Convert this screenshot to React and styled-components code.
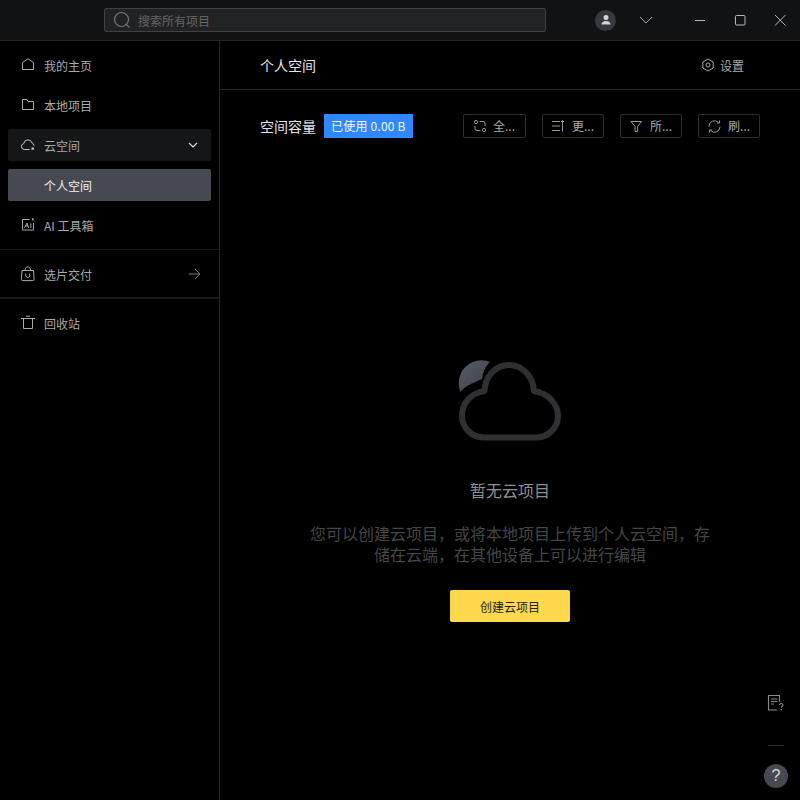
import React from 'react';
import styled, { createGlobalStyle } from 'styled-components';

const GlobalStyle = createGlobalStyle`
  html, body {
    margin: 0;
    padding: 0;
    background: #000;
    font-family: "Noto Sans CJK SC", "Liberation Sans", sans-serif;
  }
  * { box-sizing: border-box; }
`;

const Icon = ({ size = 16, sw = 1, children, ...rest }) => (
  <svg width={size} height={size} viewBox={`0 0 ${size} ${size}`} fill="none" stroke="currentColor" strokeWidth={sw} {...rest}>
    {children}
  </svg>
);

const navItems = [
  { label: '我的主页', icon: <path d="M2.5 5.500 8 1.800l5.500 3.700v7h-11z" strokeLinejoin="round" /> },
  { label: '本地项目', icon: <path d="M2.500 2.500H7l1 2h5.500v8h-11z" strokeLinejoin="round" /> },
];

const App = () => (
  <Page>
    <GlobalStyle />
    <TitleBar>
      <SearchBox>
        <svg width="20" height="20" viewBox="0 0 20 20" fill="none" stroke="#77797d" strokeWidth="1.2">
          <circle cx="9.500" cy="9.500" r="7" />
          <path d="m14.600 14.600 3 3" />
        </svg>
        <span>搜索所有项目</span>
      </SearchBox>
      <Avatar>
        <svg width="12" height="12" viewBox="0 0 12 12" fill="#d4d5d8">
          <circle cx="6" cy="3.600" r="2.500" />
          <path d="M1.500 10.600c0-2.400 1.800-3.600 4.500-3.600s4.500 1.200 4.500 3.600z" />
        </svg>
      </Avatar>
      <AccountArrow>
        <svg width="14" height="8" viewBox="0 0 14 8" fill="none" stroke="#a8a9ac" strokeWidth="1">
          <path d="m1 1 6 6 6-6" />
        </svg>
      </AccountArrow>
      <WindowButtons>
        <Icon size={14}><path d="M2 7.500h10" /></Icon>
        <Icon size={14}><rect x="2.500" y="2.500" width="9.500" height="9.500" rx="1" /></Icon>
        <Icon size={14}><path d="m2 2 10.500 10.500M12.500 2 2 12.500" /></Icon>
      </WindowButtons>
    </TitleBar>
    <Body>
      <Sidebar>
        <NavGroup>
          {navItems.map((item) => (
            <NavItem key={item.label}>
              <Icon>{item.icon}</Icon>
              <span>{item.label}</span>
            </NavItem>
          ))}
          <NavItem $open>
            <Icon>
              <path d="M9.500 12.500H4.200a3 3 0 0 1-.5-5.900 4.300 4.300 0 0 1 8.400-.6 3.300 3.300 0 0 1 2 2.800" />
              <rect x="11.500" y="10.500" width="2.400" height="2.200" fill="currentColor" stroke="none" />
            </Icon>
            <span>云空间</span>
            <Trailing $bright>
              <Icon size={12} sw={1.2}><path d="m2 4 4 4 4-4" /></Icon>
            </Trailing>
          </NavItem>
          <NavItem $active>
            <Spacer />
            <span>个人空间</span>
          </NavItem>
          <NavItem>
            <Icon>
              <path d="M9.500 2.500h-7V13h11V6" />
              <path d="M4.500 11 7 6l1.700 5M5.500 9h2.500M10.800 6.500V11" />
              <path d="M12.800 1.200v2.200" strokeWidth="1.400" />
            </Icon>
            <span>AI 工具箱</span>
          </NavItem>
        </NavGroup>
        <SidebarSection>
          <NavItem>
            <Icon>
              <path d="M2 4.500h11.500l.6 8.700a1.300 1.300 0 0 1-1.300 1.400H2.700a1.300 1.300 0 0 1-1.300-1.400z" strokeLinejoin="round" />
              <path d="M5 4.500C5 2 6.300.8 7.700.8s2.800 1.200 2.800 3.700" />
              <path d="M5.700 7.500v2a2 2 0 0 0 4 0v-2" />
            </Icon>
            <span>选片交付</span>
            <Trailing $nudge>
              <Icon size={14}><path d="M1.500 7h11M8 2l5 5-5 5" /></Icon>
            </Trailing>
          </NavItem>
        </SidebarSection>
        <TrashSection>
          <NavItem>
            <Icon>
              <path d="M1 3.500h14M6 1.200h4M3.500 3.500v10h9v-10" />
            </Icon>
            <span>回收站</span>
          </NavItem>
        </TrashSection>
      </Sidebar>
      <Main>
        <Header>
          <h1>个人空间</h1>
          <SettingsLink>
            <Icon size={14}>
              <path d="M7 1 12.200 4v6L7 13l-5.200-3V4z" strokeLinejoin="round" />
              <circle cx="7" cy="7" r="2" />
            </Icon>
            <span>设置</span>
          </SettingsLink>
        </Header>
        <Toolbar>
          <CapacityLabel>空间容量</CapacityLabel>
          <CapacityBadge>已使用 0.00 B</CapacityBadge>
          <ToolButtons>
            <ToolButton $wide>
              <Icon size={14}>
                <circle cx="3" cy="3" r="1.600" />
                <circle cx="11" cy="11" r="1.600" />
                <path d="M6.500 2.500H10a2 2 0 0 1 2 2V7M2 7v2.500a2 2 0 0 0 2 2h3.500" />
              </Icon>
              <span>全...</span>
            </ToolButton>
            <ToolButton>
              <Icon size={14}>
                <path d="M0 2.500h8M0 7h8M0 11.500h8M10.500 12.500V1.500M9 3l1.500-1.500L12 3" />
              </Icon>
              <span>更...</span>
            </ToolButton>
            <ToolButton>
              <Icon size={14}>
                <path d="M1 2.500h10.500L7.600 7.500v5H5v-5z" strokeLinejoin="round" />
              </Icon>
              <span>所...</span>
            </ToolButton>
            <ToolButton>
              <Icon size={14}>
                <path d="M1 7.500A5.500 5.500 0 0 1 10.500 3.500M12 7.500A5.500 5.500 0 0 1 2.500 11.500" />
                <path d="M11.500 1.500V4H9M1.500 13.500V11H4" />
              </Icon>
              <span>刷...</span>
            </ToolButton>
          </ToolButtons>
        </Toolbar>
        <EmptyState>
          <svg width="106" height="86" viewBox="0 0 106 86" fill="none">
            <defs>
              <linearGradient id="moon" x1="0" y1="0" x2="1" y2="1">
                <stop offset="0" stopColor="#565b64" />
                <stop offset="1" stopColor="#3e434b" />
              </linearGradient>
            </defs>
            <path d="M33 3.700A23 23 0 0 0 3.500 34C8 28 16 25 25 21 26 14 28 9 33 3.700z" fill="url(#moon)" />
            <path
              d="M27.500 33C28 18 39 7 52 7s24 11 25 26c13 2 24 12 24 25 0 12-10 21.500-22 21.500H27C15 79.500 5 70 5 58c0-13 9-23 22.500-25z"
              stroke="#2e3033"
              strokeWidth="6"
              strokeLinejoin="round"
            />
          </svg>
          <EmptyTitle>暂无云项目</EmptyTitle>
          <EmptyText>您可以创建云项目，或将本地项目上传到个人云空间，存储在云端，在其他设备上可以进行编辑</EmptyText>
          <CreateButton>创建云项目</CreateButton>
        </EmptyState>
        <SideTools>
          <svg width="18" height="18" viewBox="0 0 18 18" fill="none" stroke="#8b8c8f" strokeWidth="1.100">
            <path d="M10 16H1.500V1.500h11V8M4 5h6.500M4 7.500h6.500M4 10h3" />
            <path d="M12.500 11c0-2 3.500-2 3.500 0 0 1.300-1.700 1.300-1.700 2.700M14.300 15v1.200" />
          </svg>
          <ToolDivider />
          <HelpButton>?</HelpButton>
        </SideTools>
      </Main>
    </Body>
  </Page>
);

export default App;

const Page = styled.div`
  width: 800px;
  height: 800px;
  display: flex;
  flex-direction: column;
  overflow: hidden;
  background: #000;
`;

const TitleBar = styled.div`
  height: 41px;
  flex: none;
  display: flex;
  align-items: center;
  padding-left: 104px;
  background: #111214;
  border-bottom: 1px solid #242527;
`;

const SearchBox = styled.div`
  width: 442px;
  height: 24px;
  display: flex;
  align-items: center;
  gap: 6px;
  padding-left: 7px;
  background: #212224;
  border: 1px solid #404144;
  border-radius: 2px;
  color: #636467;
  font-size: 12px;
`;

const Avatar = styled.div`
  width: 21px;
  height: 21px;
  margin-left: 49px;
  display: flex;
  align-items: center;
  justify-content: center;
  border-radius: 50%;
  background: #37383d;
`;

const AccountArrow = styled.div`
  display: flex;
  margin-left: 23px;
`;

const WindowButtons = styled.div`
  display: flex;
  gap: 26px;
  margin-left: 40px;
  color: #b5b6b8;
`;

const Body = styled.div`
  flex: 1;
  display: flex;
  min-height: 0;
`;

const Sidebar = styled.nav`
  width: 220px;
  flex: none;
  border-right: 1px solid #252628;
  padding-top: 8px;
`;

const NavGroup = styled.div`
  display: flex;
  flex-direction: column;
  gap: 8px;
  padding: 0 8px 8px;
`;

const SidebarSection = styled.div`
  padding: 8px 8px 7px;
  border-top: 1px solid #1a1b1c;
`;

const TrashSection = styled.div`
  padding: 8px 8px;
  border-top: 2px solid #1a1b1c;
`;

const NavItem = styled.div`
  height: 32px;
  display: flex;
  align-items: center;
  gap: 8px;
  padding: 0 12px;
  border-radius: 2px;
  font-size: 12px;
  color: ${(props) => (props.$active ? '#f0f0f2' : '#a9aaac')};
  background: ${(props) => (props.$active ? '#474950' : props.$open ? '#151618' : 'transparent')};
  svg { color: ${(props) => (props.$open ? '#c6c7c9' : '#a9aaac')}; flex: none; }
`;

const Spacer = styled.div`
  width: 16px;
`;

const Trailing = styled.div`
  margin-left: auto;
  margin-right: ${(props) => (props.$nudge ? '-2px' : '0')};
  display: flex;
  align-items: center;
  svg { color: ${(props) => (props.$bright ? '#d8d9db' : '#77787b')}; }
`;

const Main = styled.main`
  flex: 1;
  position: relative;
  display: flex;
  flex-direction: column;
  min-width: 0;
`;

const Header = styled.header`
  height: 49px;
  flex: none;
  display: flex;
  align-items: center;
  justify-content: space-between;
  padding: 0 56px 0 40px;
  border-bottom: 1px solid #252628;

  h1 {
    margin: 0;
    font-size: 14px;
    font-weight: 400;
    color: #e4e4e6;
  }
`;

const SettingsLink = styled.div`
  display: flex;
  align-items: center;
  gap: 5px;
  font-size: 12px;
  color: #a9aaac;
`;

const Toolbar = styled.div`
  display: flex;
  align-items: center;
  margin-top: 24px;
  padding: 0 40px;
`;

const CapacityLabel = styled.div`
  font-size: 14px;
  color: #e4e4e6;
`;

const CapacityBadge = styled.div`
  height: 24px;
  margin-left: 8px;
  padding: 0 7px 1px;
  display: flex;
  align-items: center;
  background: #2f88ff;
  color: #f4f8ff;
  font-size: 12px;
  letter-spacing: 0.2px;
`;

const ToolButtons = styled.div`
  margin-left: auto;
  display: flex;
  gap: 16px;
`;

const ToolButton = styled.div`
  width: ${(props) => (props.$wide ? '63px' : '62px')};
  height: 24px;
  display: flex;
  align-items: center;
  gap: 6px;
  padding: 0 0 1px 9px;
  border: 1px solid #2c2d2f;
  border-radius: 2px;
  font-size: 12px;
  color: #a9aaac;
  svg { color: #98999c; flex: none; }
`;

const EmptyState = styled.div`
  display: flex;
  flex-direction: column;
  align-items: center;
  margin-top: 220px;
`;

const EmptyTitle = styled.div`
  margin-top: 34px;
  font-size: 16px;
  line-height: 24px;
  color: #8f9093;
`;

const EmptyText = styled.p`
  width: 410px;
  margin: 21px 0 0;
  font-size: 16px;
  line-height: 21px;
  text-align: center;
  color: #454648;
`;

const CreateButton = styled.button`
  width: 120px;
  height: 32px;
  margin-top: 25px;
  border: 0;
  border-radius: 2px;
  background: #ffd84d;
  color: #222;
  font-family: inherit;
  font-size: 12px;
`;

const SideTools = styled.div`
  position: absolute;
  right: 12px;
  bottom: 12px;
  width: 24px;
  display: flex;
  flex-direction: column;
  align-items: center;
`;

const ToolDivider = styled.div`
  width: 16px;
  height: 1px;
  margin: 33px 0 18px;
  background: #2a2b2d;
`;

const HelpButton = styled.div`
  width: 24px;
  height: 24px;
  border-radius: 50%;
  background: #474950;
  color: #d8d9db;
  font-size: 16px;
  line-height: 24px;
  text-align: center;
  font-family: "Liberation Sans", sans-serif;
`;
